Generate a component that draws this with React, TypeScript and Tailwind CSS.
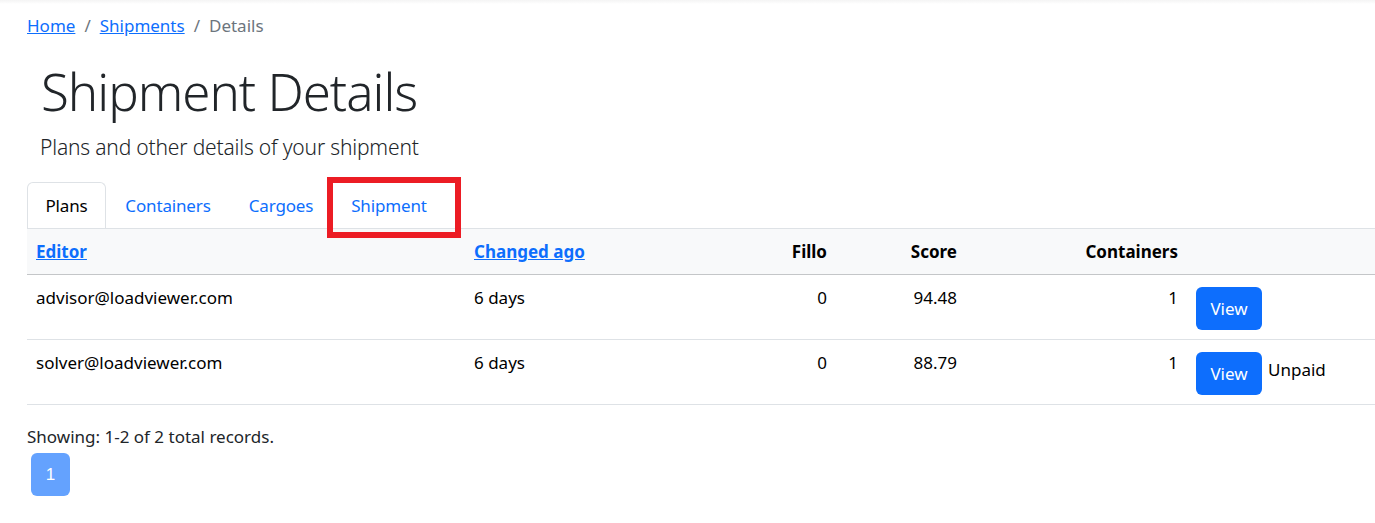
export default function App() {
  const rows = [
    { editor: "advisor@loadviewer.com", ago: "6 days", fillo: "0", score: "94.48", n: "1", paid: "" },
    { editor: "solver@loadviewer.com", ago: "6 days", fillo: "0", score: "88.79", n: "1", paid: "Unpaid" },
  ];
  return (
    <div className="relative h-[523px] w-[1375px] overflow-hidden bg-white font-['Noto_Sans',sans-serif] text-[17px] leading-[24px] text-[#212529]">
      <div className="h-[4px] bg-gradient-to-b from-[#f4f4f4] to-white" />
      <nav className="ml-[27px] mt-[10px] flex h-[24px] items-center">
        <a href="#" className="text-[#0d6efd] underline">Home</a>
        <span className="px-[9px] text-[#6c757d]">/</span>
        <a href="#" className="text-[#0d6efd] underline">Shipments</a>
        <span className="px-[9px] text-[#6c757d]">/</span>
        <span className="text-[#6c757d]">Details</span>
      </nav>
      <h1 className="ml-[41px] mt-[20px] h-[66px] text-[51px] font-light leading-[66px] tracking-[-1px] text-[#212529]">Shipment Details</h1>
      <p className="ml-[40px] mt-[8px] h-[30px] text-[21px] font-light leading-[30px] tracking-[-0.18px]">Plans and other details of your shipment</p>
      <ul className="ml-[27px] mt-[20px] flex h-[46px] tracking-[-0.15px]">
        <li className="flex h-[46px] w-[79px] items-center justify-center rounded-t-[6px] border border-b-0 border-[#dee2e6] bg-white pt-[1px] text-[#000]">Plans</li>
        <li className="flex h-[46px] w-[124px] items-center justify-center pt-[1px] text-[#0d6efd]">Containers</li>
        <li className="flex h-[46px] w-[102px] items-center justify-center pt-[1px] text-[#0d6efd]">Cargoes</li>
        <li className="flex h-[46px] w-[114px] items-center justify-center pt-[1px] text-[#0d6efd]">Shipment</li>
      </ul>
      <table className="ml-[27px] w-[1348px] table-fixed border-collapse text-black">
        <colgroup>
          <col className="w-[439px]" />
          <col className="w-[259px]" />
          <col className="w-[110px]" />
          <col className="w-[130px]" />
          <col className="w-[221px]" />
          <col />
        </colgroup>
        <thead>
          <tr className="h-[46px] border-y border-t-[#dee2e6] border-b-[#c4c6c8] bg-[#f8f9fa] font-bold">
            <th className="px-[9px] text-left"><a href="#" className="text-[#0d6efd] underline">Editor</a></th>
            <th className="px-[8px] text-left"><a href="#" className="text-[#0d6efd] underline">Changed ago</a></th>
            <th className="px-[8px] text-right">Fillo</th>
            <th className="px-[8px] text-right">Score</th>
            <th className="px-[8px] text-right">Containers</th>
            <th />
          </tr>
        </thead>
        <tbody>
          {rows.map((r) => (
            <tr key={r.editor} className="h-[65px] border-b border-[#dee2e6] align-top">
              <td className="px-[9px] pt-[11px]">{r.editor}</td>
              <td className="px-[8px] pt-[11px]">{r.ago}</td>
              <td className="px-[8px] pt-[11px] text-right">{r.fillo}</td>
              <td className="px-[8px] pt-[11px] text-right">{r.score}</td>
              <td className="px-[8px] pt-[11px] text-right">{r.n}</td>
              <td className="pl-[10px] pt-[12px]">
                <div className="flex items-start">
                  <button className="h-[43px] w-[66px] rounded-[6px] bg-[#0d6efd] text-white">View</button>
                  {r.paid && <span className="ml-[6px] mt-[6px]">{r.paid}</span>}
                </div>
              </td>
            </tr>
          ))}
        </tbody>
      </table>
      <p className="ml-[27px] mt-[20px] h-[24px]">Showing: 1-2 of 2 total records.</p>
      <button className="ml-[31px] mt-[4px] block h-[43px] w-[39px] rounded-[6px] bg-[#64a2fe] font-['Liberation_Sans',sans-serif] text-[17px] text-white">1</button>
      <div className="absolute left-[327px] top-[177px] h-[61px] w-[134px] border-[6px] border-[#ec1c24]" />
    </div>
  );
}
